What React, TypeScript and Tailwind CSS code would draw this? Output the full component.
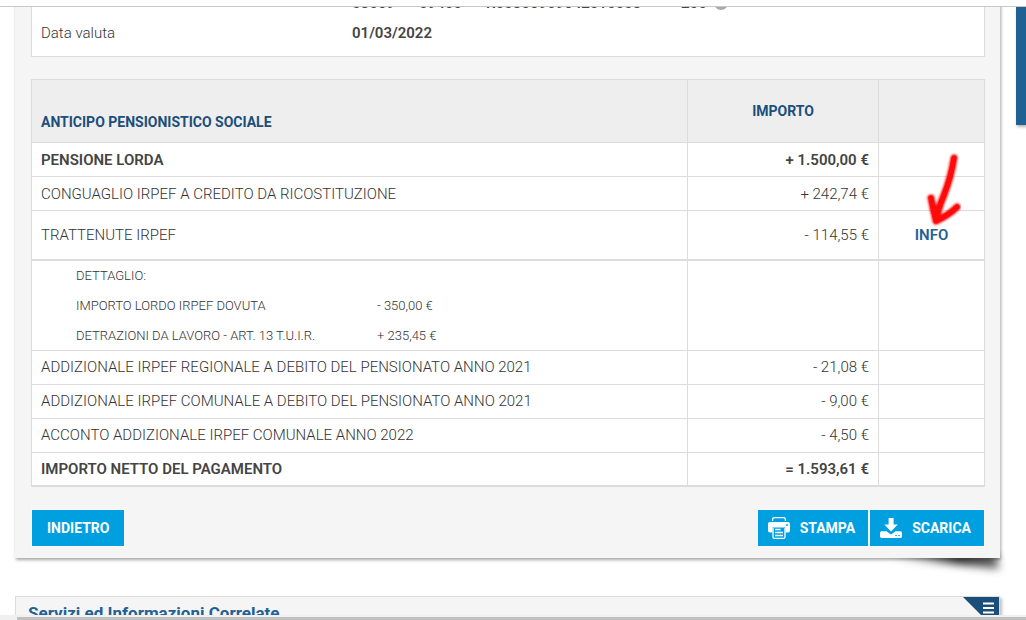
interface Voce {
  label: string;
  importo: string;
  bold?: boolean;
}

const vociIniziali: Voce[] = [
  { label: 'PENSIONE LORDA', importo: '+ 1.500,00 €', bold: true },
  { label: 'CONGUAGLIO IRPEF A CREDITO DA RICOSTITUZIONE', importo: '+ 242,74 €' },
];

const dettaglio: Voce[] = [
  { label: 'IMPORTO LORDO IRPEF DOVUTA', importo: '- 350,00 €' },
  { label: 'DETRAZIONI DA LAVORO - ART. 13 T.U.I.R.', importo: '+ 235,45 €' },
];

const vociFinali: Voce[] = [
  { label: 'ADDIZIONALE IRPEF REGIONALE A DEBITO DEL PENSIONATO ANNO 2021', importo: '- 21,08 €' },
  { label: 'ADDIZIONALE IRPEF COMUNALE A DEBITO DEL PENSIONATO ANNO 2021', importo: '- 9,00 €' },
  { label: 'ACCONTO ADDIZIONALE IRPEF COMUNALE ANNO 2022', importo: '- 4,50 €' },
  { label: 'IMPORTO NETTO DEL PAGAMENTO', importo: '= 1.593,61 €', bold: true },
];

function RigaVoce({ label, importo, bold }: Voce) {
  return (
    <tr className={bold ? 'h-[34px] font-semibold text-[#444]' : 'h-[34px]'}>
      <td className="border border-[#dcdcdc] px-[9px]">{label}</td>
      <td className="border border-[#dcdcdc] px-[9px] text-right">{importo}</td>
      <td className="border border-[#dcdcdc]"></td>
    </tr>
  );
}

function PrintIcon() {
  return (
    <svg width="22" height="22" viewBox="0 0 22 22" fill="none" aria-hidden="true">
      <path d="M4.6 4V2.4Q4.6.7 6.3.7h9.4q1.7 0 1.7 1.7V4" stroke="#fff" strokeWidth="1.3" />
      <path d="M2 5h18q2 0 2 2v6.5q0 2-2 2h-2.5v-5h-13v5H2q-2 0-2-2V7q0-2 2-2Z" fill="#fff" />
      <circle cx="19" cy="8" r="1" fill="#009fe0" />
      <path d="M5 11v9q0 1.3 1.3 1.3h9.4q1.3 0 1.3-1.3v-9" stroke="#fff" strokeWidth="1.3" />
      <path d="M7 12.5h5.5M7 15.5h8M7 18.5h8" stroke="#fff" strokeWidth="1.4" />
    </svg>
  );
}

function DownloadIcon() {
  return (
    <svg width="22" height="20" viewBox="0 0 22 20" fill="none" aria-hidden="true">
      <path d="M8.6 0h5v6.5h4.2L11 13.4 4.3 6.5h4.3Z" fill="#fff" />
      <path d="M1.5 13.2h5l4.5 3.3 4.5-3.3h5Q22 13.2 22 15v3.2q0 1.8-1.5 1.8h-19Q0 20 0 18.2V15q0-1.8 1.5-1.8Z" fill="#fff" />
      <circle cx="16" cy="17.5" r="0.8" fill="#009fe0" />
      <circle cx="19" cy="17.5" r="0.8" fill="#009fe0" />
    </svg>
  );
}

// Hand-drawn arrow pointing at the INFO link
function Arrow() {
  return (
    <svg
      className="pointer-events-none absolute bottom-full left-1/2 -mb-1.5 -translate-x-1/2"
      width="60"
      height="80"
      viewBox="0 0 60 80"
      fill="none"
      aria-hidden="true"
    >
      <path
        className="blur-[1px]"
        d="M53 7Q50 26 43 44Q37 58 35 70M30 47Q32 58 35 70M56 56Q48 64 35 70"
        stroke="#ff0a0a"
        strokeWidth="7"
        strokeLinecap="round"
        strokeLinejoin="round"
      />
      <path
        d="M53 7Q50 26 43 44Q37 58 35 70M30 47Q32 58 35 70M56 56Q48 64 35 70"
        stroke="#ff0a0a"
        strokeWidth="5"
        strokeLinecap="round"
        strokeLinejoin="round"
      />
    </svg>
  );
}

// Lifted-paper shadow under the bottom right corner of the panel
function CornerShadow() {
  return (
    <svg
      className="absolute top-full right-0 -mt-2 -mr-4"
      width="140"
      height="36"
      viewBox="0 0 140 36"
      aria-hidden="true"
    >
      <defs>
        <linearGradient id="curl" x1="0" x2="1" y1="0" y2="0">
          <stop offset="0" stopColor="#000" stopOpacity="0" />
          <stop offset="0.6" stopColor="#000" stopOpacity="0.9" />
          <stop offset="1" stopColor="#000" stopOpacity="0.6" />
        </linearGradient>
      </defs>
      <path className="blur-[4px]" d="M16 4H120L123 19Q80 13 16 8Z" fill="url(#curl)" />
    </svg>
  );
}

const buttonClass =
  'flex h-[38px] items-center border border-white bg-[#009fe0] text-sm font-bold text-white';

export default function App() {
  return (
    <div className="flex h-screen flex-col overflow-hidden bg-white font-['Roboto','Open_Sans',sans-serif] text-[15px] leading-[20px] font-light text-[#333]">
      <div className="h-[7px] shrink-0 border-b border-[#c8c8c8]" />

      <div className="min-h-0 flex-1 overflow-hidden">
        <div className="flex items-start gap-4 pl-[15px]">
          <main className="relative min-w-0 flex-1">
            <CornerShadow />
            <div className="relative bg-[#f5f5f5] pr-[15px] pb-[11px] pl-4 shadow-[1px_2px_3px_rgba(0,0,0,0.35)]">
              <div className="-mt-5 border border-[#dcdcdc] bg-white px-[9px] pb-2 leading-[30px]">
                <p className="flex items-center pl-[311px] font-semibold text-[#444]">
                  <span className="w-[67px]">03069</span>
                  <span className="w-[67px]">09400</span>
                  <span className="w-[195px]">R00306909642010003</span>
                  <span className="w-[33px]">200</span>
                  <span className="size-[14px] rounded-full bg-[#aaa]" />
                </p>
                <dl className="grid grid-cols-[311px_1fr]">
                  <dt>Data valuta</dt>
                  <dd className="font-semibold text-[#444]">01/03/2022</dd>
                </dl>
              </div>

              <table className="mt-[22px] w-full table-fixed border-collapse border-b-2 border-[#dcdcdc] bg-white">
                <colgroup>
                  <col />
                  <col className="w-[191px]" />
                  <col className="w-[106px]" />
                </colgroup>
                <thead>
                  <tr className="h-[63px] bg-[#eee] text-sm font-semibold text-[#1b4f7a]">
                    <th className="border border-[#dcdcdc] px-[9px] pb-[10px] text-left align-bottom">
                      ANTICIPO PENSIONISTICO SOCIALE
                    </th>
                    <th className="border border-[#dcdcdc]">IMPORTO</th>
                    <td className="border border-[#dcdcdc]"></td>
                  </tr>
                </thead>
                <tbody>
                  {vociIniziali.map((v) => (
                    <RigaVoce key={v.label} {...v} />
                  ))}
                  <tr className="h-[49px]">
                    <td className="border border-b-2 border-[#dcdcdc] px-[9px]">TRATTENUTE IRPEF</td>
                    <td className="border border-b-2 border-[#dcdcdc] px-[9px] text-right">- 114,55 €</td>
                    <td className="border border-b-2 border-[#dcdcdc] text-center">
                      <span className="relative inline-block">
                        <a href="#dettaglio" className="font-semibold text-[#1f6193]">
                          INFO
                        </a>
                        <Arrow />
                      </span>
                    </td>
                  </tr>
                  <tr id="dettaglio">
                    <td className="border border-[#dcdcdc] pt-[5px] pb-1 pl-11 text-[13px] leading-[20px]">
                      <p>DETTAGLIO:</p>
                      <dl className="mt-[10px] grid grid-cols-[301px_1fr] gap-y-[10px]">
                        {dettaglio.map((d) => (
                          <div key={d.label} className="contents">
                            <dt>{d.label}</dt>
                            <dd>{d.importo}</dd>
                          </div>
                        ))}
                      </dl>
                    </td>
                    <td className="border border-[#dcdcdc]"></td>
                    <td className="border border-[#dcdcdc]"></td>
                  </tr>
                  {vociFinali.map((v) => (
                    <RigaVoce key={v.label} {...v} />
                  ))}
                </tbody>
              </table>

              <div className="mt-[22px] flex">
                <button type="button" className={`${buttonClass} mr-auto px-[15px]`}>
                  INDIETRO
                </button>
                <button type="button" className={`${buttonClass} gap-[10px] pr-[13px] pl-[10px]`}>
                  <PrintIcon />
                  STAMPA
                </button>
                <button type="button" className={`${buttonClass} gap-[10px] pr-[13px] pl-[10px]`}>
                  <DownloadIcon />
                  SCARICA
                </button>
              </div>
            </div>
          </main>
          <div className="w-[10px] shrink-0">
            <div className="h-[118px] bg-[#1f6193] shadow-[1px_2px_3px_rgba(0,0,0,0.3)]" />
          </div>
        </div>

        <section className="mt-[38px] mr-[26px] ml-[15px] flex justify-between border border-[#dcdcdc] bg-[#f5f5f5] shadow-[2px_2px_3px_rgba(0,0,0,0.25)]">
          <h2 className="px-3 py-[6px] text-[17px] font-bold text-[#1f6193]">
            Servizi ed Informazioni Correlate
          </h2>
          <svg width="36" height="36" viewBox="0 0 36 36" aria-hidden="true">
            <path d="M0 0H36V36Z" fill="#1b4f7a" />
            <path d="M20 6.5H31M20 11H31M20 15.5H31" stroke="#fff" strokeWidth="2" />
          </svg>
        </section>
      </div>

      <div className="h-[5px] shrink-0 bg-[#f0f0f0] pt-[2px] pl-[17px]">
        <div className="h-full bg-[#c0c0c0]" />
      </div>
    </div>
  );
}
